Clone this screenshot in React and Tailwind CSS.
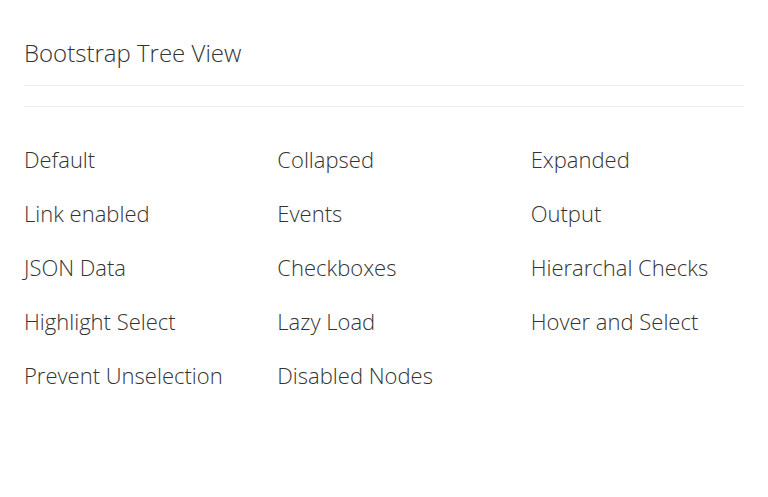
import React from "react";

const EXAMPLES = [
  "Default",
  "Collapsed",
  "Expanded",
  "Link enabled",
  "Events",
  "Output",
  "JSON Data",
  "Checkboxes",
  "Hierarchal Checks",
  "Highlight Select",
  "Lazy Load",
  "Hover and Select",
  "Prevent Unselection",
  "Disabled Nodes",
];

const App = () => {
  return (
    <div className="min-h-screen bg-white px-6 text-[#333] font-['Open_Sans',sans-serif] font-light">
      <div className="pt-[36px] pb-[16px] border-b border-[#eee]">
        <h1 className="text-[24px] leading-[33px]">Bootstrap Tree View</h1>
      </div>
      <hr className="mt-5 border-t border-[#eee]" />
      <div className="grid grid-cols-3 w-[760px] pt-[25px]">
        {EXAMPLES.map((name) => (
          <div key={name} className="h-[54px] flex items-center text-[22px]">
            {name}
          </div>
        ))}
      </div>
    </div>
  );
};

export default App;
